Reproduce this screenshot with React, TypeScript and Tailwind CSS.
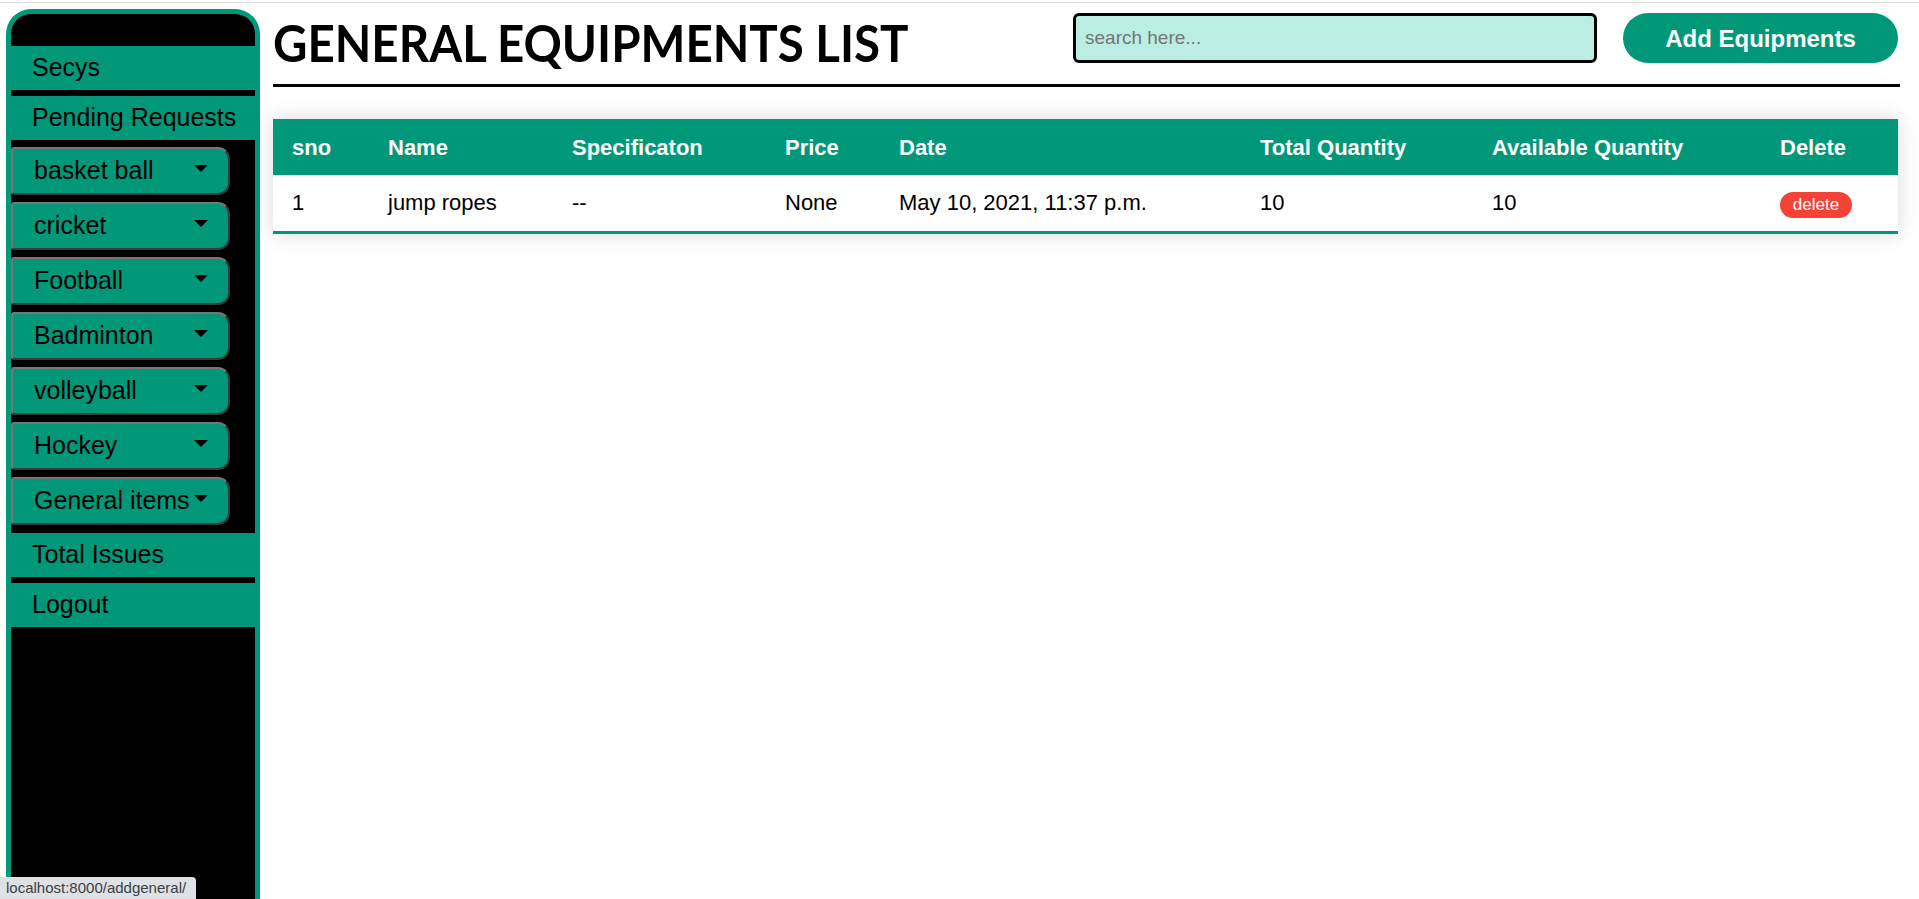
const SPORTS = ['basket ball', 'cricket', 'Football', 'Badminton', 'volleyball', 'Hockey', 'General items']

const COLUMNS = [
  { label: 'sno', w: 'w-[96px]' },
  { label: 'Name', w: 'w-[184px]' },
  { label: 'Specificaton', w: 'w-[213px]' },
  { label: 'Price', w: 'w-[114px]' },
  { label: 'Date', w: 'w-[361px]' },
  { label: 'Total Quantity', w: 'w-[232px]' },
  { label: 'Available Quantity', w: 'w-[288px]' },
  { label: 'Delete', w: 'w-[137px]' },
]

const ROWS = [
  { sno: 1, name: 'jump ropes', spec: '--', price: 'None', date: 'May 10, 2021, 11:37 p.m.', total: 10, available: 10 },
]

function SideLink({ label }: { label: string }) {
  return (
    <a href="#" className="flex h-[44px] items-center bg-[#009879] pl-[21px] text-[25px] text-black">
      {label}
    </a>
  )
}

function SportButton({ label }: { label: string }) {
  return (
    <button className="relative flex h-[48px] w-[219px] items-center rounded-l-[3px] rounded-r-[12px] border-2 border-t-[#767676] border-l-[#767676] border-r-[#3a3a3a] border-b-[#3a3a3a] bg-[#009879] pl-[21px] text-left text-[25px] text-black">
      {label}
      {/* caret */}
      <svg width="14" height="7" viewBox="0 0 14 7" className="absolute right-[20px] top-[16px]">
        <path d="M0 0h14L7 7z" fill="#000" />
      </svg>
    </button>
  )
}

export default function App() {
  return (
    <div className="h-[899px] overflow-hidden bg-white font-['Liberation_Sans',Arial,sans-serif]">
      <div className="h-[3px] border-b border-[#dedede]" />
      <div className="flex">
        {/* sidebar */}
        <aside className="ml-[6px] mt-[6px] h-[890px] w-[254px] shrink-0 overflow-hidden rounded-t-[25px] border-[5px] border-b-0 border-[#009879] bg-black">
          <div className="h-[32px]" />
          <SideLink label="Secys" />
          <div className="h-[6px]" />
          <SideLink label="Pending Requests" />
          <div className="flex flex-col gap-[7px] pb-[8px] pt-[7px]">
            {SPORTS.map((s) => (
              <SportButton key={s} label={s} />
            ))}
          </div>
          <SideLink label="Total Issues" />
          <div className="h-[6px]" />
          <SideLink label="Logout" />
        </aside>

        {/* main */}
        <main className="ml-[13px] flex-1 pr-[19px]">
          <div className="flex items-start pr-[2px] pt-[8px]">
            <h1 className="h-[62px] w-[634px] origin-left scale-x-[0.913] whitespace-nowrap font-['Lato',sans-serif] text-[52px] font-bold leading-[62px] text-black">
              GENERAL EQUIPMENTS LIST
            </h1>
            <input
              placeholder="search here..."
              className="ml-auto mt-[2px] h-[50px] w-[524px] rounded-[6px] border-[3px] border-black bg-[#bbeee2] pl-[9px] text-[19px] text-black outline-none placeholder:text-[#757575]"
            />
            <button className="ml-[26px] mt-[2px] h-[50px] w-[275px] rounded-full bg-[#009879] pt-[2px] text-[24px] font-bold text-white">
              Add Equipments
            </button>
          </div>
          <div className="mt-[11px] h-[3px] bg-black" />

          <table className="mt-[32px] w-[1625px] table-fixed border-collapse shadow-[0_0_20px_rgba(0,0,0,0.15)]">
            <colgroup>
              {COLUMNS.map((c) => (
                <col key={c.label} className={c.w} />
              ))}
            </colgroup>
            <thead>
              <tr className="bg-[#009879]">
                {COLUMNS.map((c) => (
                  <th key={c.label} className="h-[56px] pl-[19px] text-left text-[22px] font-bold text-white">
                    {c.label}
                  </th>
                ))}
              </tr>
            </thead>
            <tbody>
              {ROWS.map((r) => (
                <tr key={r.sno} className="border-b-[3px] border-[#009879] bg-white text-[22px] text-black">
                  <td className="h-[57px] pl-[19px]">{r.sno}</td>
                  <td className="pl-[19px]">{r.name}</td>
                  <td className="pl-[19px]">{r.spec}</td>
                  <td className="pl-[19px]">{r.price}</td>
                  <td className="pl-[19px]">{r.date}</td>
                  <td className="pl-[19px]">{r.total}</td>
                  <td className="pl-[19px]">{r.available}</td>
                  <td className="pl-[19px]">
                    <button className="h-[26px] w-[72px] rounded-full bg-[#f44336] text-[17px] leading-[26px] text-white">
                      delete
                    </button>
                  </td>
                </tr>
              ))}
            </tbody>
          </table>
        </main>
      </div>

      {/* browser status bubble */}
      <div className="fixed bottom-0 left-0 h-[22px] rounded-tr-[4px] bg-[#dee1e6] pl-[6px] pr-[10px] text-[15px] leading-[22px] text-[#3c4043]">
        localhost:8000/addgeneral/
      </div>
    </div>
  )
}
